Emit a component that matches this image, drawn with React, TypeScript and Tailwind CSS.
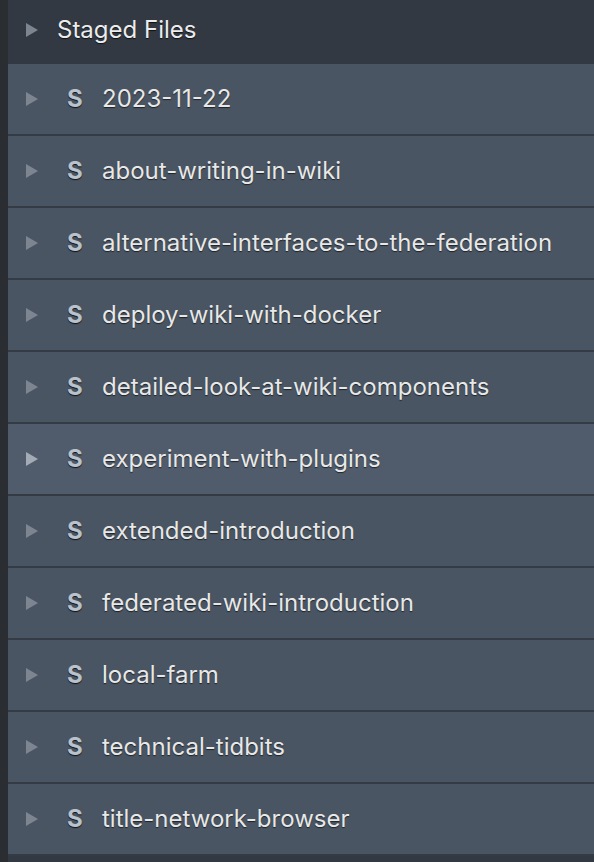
const files = [
  "2023-11-22",
  "about-writing-in-wiki",
  "alternative-interfaces-to-the-federation",
  "deploy-wiki-with-docker",
  "detailed-look-at-wiki-components",
  "experiment-with-plugins",
  "extended-introduction",
  "federated-wiki-introduction",
  "local-farm",
  "technical-tidbits",
  "title-network-browser",
];

function Caret({ light }: { light?: boolean }) {
  return (
    <svg width="12" height="14" viewBox="0 0 12 14" className="shrink-0">
      <path d="M0 0 L12 7 L0 14 Z" fill={light ? "#a3abb6" : "#7d8591"} />
    </svg>
  );
}

export default function App() {
  return (
    <div className="flex h-[862px] w-[594px] overflow-hidden bg-[#2a2e34] font-['Inter',sans-serif]">
      <div className="w-2 shrink-0 bg-[#2a2d32]" />
      <div className="flex flex-1 flex-col bg-[#323943]">
        <div className="flex h-16 shrink-0 items-center pb-[4px] pl-[18px]">
          <Caret />
          <span className="ml-[19px] text-[24px] leading-none text-[#ececec] [text-shadow:0_1px_1px_rgba(0,0,0,0.7)]">
            Staged Files
          </span>
        </div>
        {files.map((name) => {
          const active = name === "experiment-with-plugins";
          return (
            <div
              key={name}
              className={`flex h-[72px] shrink-0 items-center border-b-2 border-[#343b44] pl-[18px] ${
                active ? "bg-[#505c6b]" : "bg-[#4a5563]"
              }`}
            >
              <Caret light={active} />
              <span className="ml-[29px] w-[15px] text-[24px] leading-none font-bold text-[#b9c1cb] [text-shadow:0_1px_1px_rgba(0,0,0,0.8)]">
                S
              </span>
              <span className="ml-[20px] text-[24px] leading-none text-[#e8e8e8] [text-shadow:0_1px_1px_rgba(0,0,0,0.6)]">
                {name}
              </span>
            </div>
          );
        })}
      </div>
    </div>
  );
}
